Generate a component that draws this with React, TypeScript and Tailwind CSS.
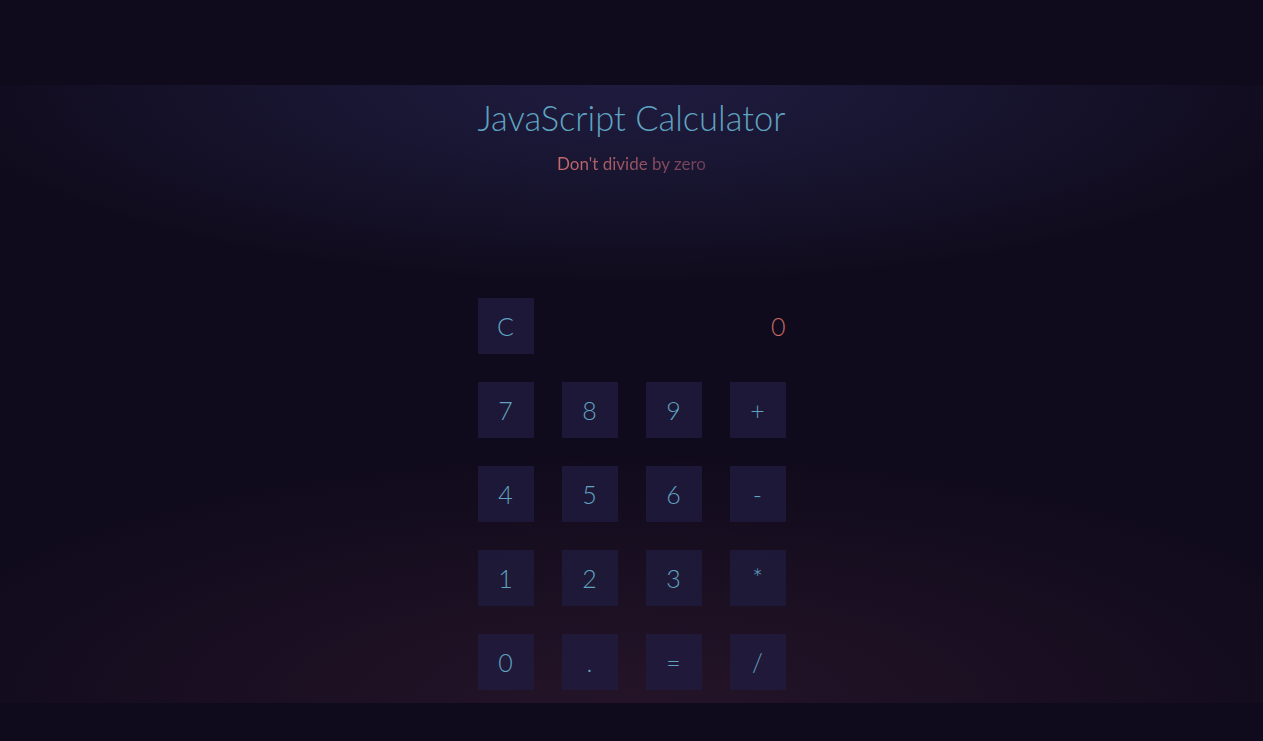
import React from "react";

const keys = ["7", "8", "9", "+", "4", "5", "6", "-", "1", "2", "3", "*", "0", ".", "=", "/"];

function Key({ label }: { label: string }) {
  return (
    <div className="w-[56px] h-[56px] bg-[#201b3e]/80 flex items-center justify-center text-[25px] font-light text-[#5fa3c0] leading-none">
      {label}
    </div>
  );
}

export default function App() {
  return (
    <div className="min-h-[741px] bg-[#100b1c] font-['Lato','Open_Sans',sans-serif] flex flex-col">
      <div className="h-[85px]" />
      <section className="h-[618px] flex flex-col items-center bg-[radial-gradient(ellipse_55%_32%_at_50%_0%,#1e1b3f_0%,#1a1735_35%,rgba(16,11,28,0)_100%),radial-gradient(ellipse_60%_40%_at_50%_100%,#251428_0%,rgba(16,11,28,0)_100%)]">
        <h1 className="mt-[11px] text-[34.5px] font-light text-[#5fa3c0] leading-[44px]">
          JavaScript Calculator
        </h1>
        <p className="mt-[14px] text-[17px] leading-[20px] bg-[linear-gradient(90deg,#c86c6c,#6a3f58)] bg-clip-text text-transparent">
          Don't divide by zero
        </p>
        <div className="mt-[124px] w-[308px] grid grid-cols-4 gap-[28px]">
          <Key label="C" />
          <div className="col-span-3 flex items-center justify-end text-[25px] font-light text-[#c46a66] leading-none">
            0
          </div>
          {keys.map((k) => (
            <Key key={k} label={k} />
          ))}
        </div>
      </section>
    </div>
  );
}
